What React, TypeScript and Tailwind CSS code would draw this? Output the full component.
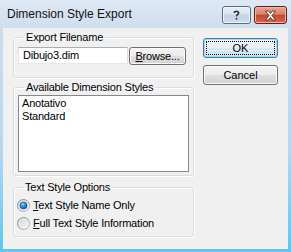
import React from "react";

const font = { fontFamily: '"Liberation Sans", Arial, sans-serif' };

function Radio({ checked, id }: { checked: boolean; id: string }) {
  return (
    <svg width="13" height="13" viewBox="0 0 13 13" className="shrink-0">
      <defs>
        <linearGradient id={`ring-${id}`} x1="0" y1="0" x2="1" y2="1">
          <stop offset="0" stopColor="#7e8386" />
          <stop offset="1" stopColor="#b8bcbf" />
        </linearGradient>
        <linearGradient id={`fill-${id}`} x1="0" y1="0" x2="1" y2="1">
          <stop offset="0" stopColor="#cfd1d3" />
          <stop offset="1" stopColor="#fbfbfb" />
        </linearGradient>
        <radialGradient id={`dot-${id}`} cx="0.4" cy="0.35" r="0.7">
          <stop offset="0" stopColor="#8fd6fb" />
          <stop offset="0.45" stopColor="#2a8fe0" />
          <stop offset="1" stopColor="#0d4a8c" />
        </radialGradient>
      </defs>
      <circle cx="6.5" cy="6.5" r="6" fill={`url(#fill-${id})`} stroke={`url(#ring-${id})`} strokeWidth="1" />
      <circle cx="6.5" cy="6.5" r="4.5" fill="none" stroke="#f4f4f4" strokeWidth="0.8" opacity="0.7" />
      {checked && <circle cx="6.5" cy="6.5" r="3.6" fill={`url(#dot-${id})`} stroke="#1c4f86" strokeWidth="0.6" />}
    </svg>
  );
}

function Btn({ children, def = false, className = "" }: { children: React.ReactNode; def?: boolean; className?: string }) {
  return (
    <div
      className={`flex rounded-[3px] border text-[11px] text-black ${
        def
          ? "border-[#3c7fb1] p-[2px] shadow-[inset_0_0_0_1px_#9fdcf7] bg-[linear-gradient(to_bottom,#f4f8fb_0%,#eaf3fa_50%,#d9e8f3_50%,#cfe2f0_100%)]"
          : "border-[#707070] shadow-[inset_0_0_0_1px_#fbfbfb] bg-[linear-gradient(to_bottom,#f4f4f4_0%,#ececec_50%,#dfdfdf_50%,#d2d2d2_100%)]"
      } ${className}`}
    >
      <div className={`flex-1 flex items-center justify-center leading-none ${def ? "border border-dotted border-black" : ""}`}>
        {children}
      </div>
    </div>
  );
}

export default function App() {
  return (
    <div
      className="w-[291px] h-[252px] flex flex-col overflow-hidden bg-[linear-gradient(to_bottom,#dfe9f5_0%,#cddcee_12%,#b9d6ee_60%,#5fc5ec_100%)]"
      style={font}
    >
      {/* Title bar */}
      <div className="h-[28px] shrink-0 flex items-start pl-[7px] pr-[4px]">
        <span className="mt-[7px] text-[12px] leading-[14px] text-[#111]">Dimension Style Export</span>
        <div className="ml-auto mt-[6px] flex gap-[3px]">
          <div className="w-[29px] h-[18px] rounded-[3px] border border-[#5b6b80] shadow-[inset_0_0_0_1px_#f3f7fb] bg-[linear-gradient(to_bottom,#e9eff7_0%,#d7e2ef_45%,#c3d3e6_50%,#cddcee_100%)] flex items-center justify-center">
            <svg width="11" height="13" viewBox="0 0 11 12">
              <path
                d="M2.5 3.6 C2.5 1.8 3.8 1 5.5 1 C7.3 1 8.5 1.9 8.5 3.4 C8.5 5 6.4 5.3 6.4 7 L4.6 7 C4.6 4.9 6.6 4.6 6.6 3.5 C6.6 2.8 6.1 2.5 5.5 2.5 C4.8 2.5 4.4 2.9 4.4 3.6 Z M4.6 8.3 L6.4 8.3 L6.4 10.3 L4.6 10.3 Z"
                fill="#2a2f36"
                stroke="#ffffff"
                strokeWidth="0.7"
                paintOrder="stroke"
              />
            </svg>
          </div>
          <div className="w-[33px] h-[18px] rounded-[3px] border border-[#6a1c10] shadow-[inset_0_0_0_1px_#eeb5a8] bg-[linear-gradient(to_bottom,#eaa797_0%,#d9806c_45%,#c4472f_52%,#d16a52_100%)] flex items-center justify-center">
            <svg width="13" height="11" viewBox="0 0 13 11">
              <path
                d="M1.5 1 L4.5 1 L6.5 3.5 L8.5 1 L11.5 1 L8 5.5 L11.5 10 L8.5 10 L6.5 7.5 L4.5 10 L1.5 10 L5 5.5 Z"
                fill="#ffffff"
                stroke="#5a1a10"
                strokeWidth="0.8"
                strokeLinejoin="round"
              />
            </svg>
          </div>
        </div>
      </div>

      {/* Client area */}
      <div className="flex-1 mx-[3px] mb-[3px] bg-[#f0f0f0] flex items-start">
        {/* Left column */}
        <div className="ml-[10px] mt-[3px] w-[181px] flex flex-col text-[11px] tracking-[-0.2px] text-black">
          <fieldset className="border border-[#d5dfe5] rounded-[3px] shadow-[inset_1px_1px_0_#ffffff,1px_1px_0_#ffffff] px-[4px] pb-[12px]">
            <legend className="ml-[6px] px-[2px] leading-[13px]">Export Filename</legend>
            <div className="mt-[3px] flex items-start gap-[1px]">
              <div className="w-[110px] h-[17px] border border-[#abadb3] border-l-[#e2e3ea] border-r-[#dbdfe6] border-b-[#e3e9ef] bg-white flex items-center pl-[4px] leading-none">
                Dibujo3.dim
              </div>
              <Btn className="w-[57px] h-[18px]">
                <span>
                  <span className="underline underline-offset-[1px]">B</span>rowse...
                </span>
              </Btn>
            </div>
          </fieldset>

          <fieldset className="mt-[3px] border border-[#d5dfe5] rounded-[3px] shadow-[inset_1px_1px_0_#ffffff,1px_1px_0_#ffffff] px-[4px] pb-[3px]">
            <legend className="ml-[6px] px-[2px] leading-[13px]">Available Dimension Styles</legend>
            <div className="mt-[1px] h-[77px] border border-[#828790] bg-white pl-[3px] pt-[1px] flex flex-col leading-[13px]">
              <span>Anotativo</span>
              <span>Standard</span>
            </div>
          </fieldset>

          <fieldset className="mt-[5px] border border-[#d5dfe5] rounded-[3px] shadow-[inset_1px_1px_0_#ffffff,1px_1px_0_#ffffff] px-[3px] pb-[4px]">
            <legend className="ml-[6px] px-[2px] leading-[13px]">Text Style Options</legend>
            <div className="mt-[2px] flex flex-col">
              <div className="h-[18px] flex items-center gap-[3px]">
                <Radio checked id="a" />
                <span>
                  <span className="underline underline-offset-[1px]">T</span>ext Style Name Only
                </span>
              </div>
              <div className="h-[18px] flex items-center gap-[3px]">
                <Radio checked={false} id="b" />
                <span>
                  <span className="underline underline-offset-[1px]">F</span>ull Text Style Information
                </span>
              </div>
            </div>
          </fieldset>
        </div>

        {/* Right column */}
        <div className="ml-[9px] mt-[10px] flex flex-col gap-[7px]">
          <Btn def className="w-[75px] h-[20px]">OK</Btn>
          <Btn className="w-[75px] h-[20px]">Cancel</Btn>
        </div>
      </div>
    </div>
  );
}
